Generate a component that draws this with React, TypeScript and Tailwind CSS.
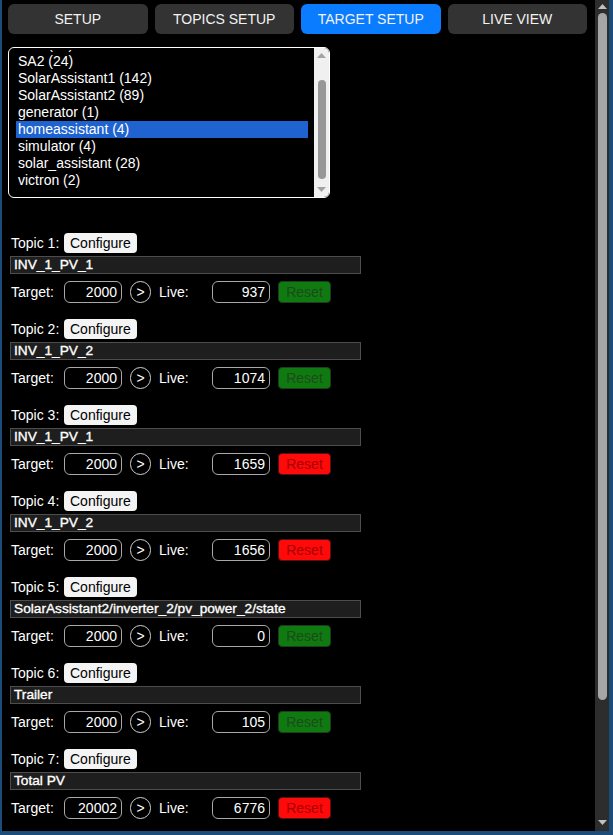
import React from "react";

const topics = [
  { n: 1, name: "INV_1_PV_1", target: "2000", live: "937", ok: true },
  { n: 2, name: "INV_1_PV_2", target: "2000", live: "1074", ok: true },
  { n: 3, name: "INV_1_PV_1", target: "2000", live: "1659", ok: false },
  { n: 4, name: "INV_1_PV_2", target: "2000", live: "1656", ok: false },
  { n: 5, name: "SolarAssistant2/inverter_2/pv_power_2/state", target: "2000", live: "0", ok: true },
  { n: 6, name: "Trailer", target: "2000", live: "105", ok: true },
  { n: 7, name: "Total PV", target: "20002", live: "6776", ok: false },
];

const items = [
  "SA1 (24)",
  "SA2 (24)",
  "SolarAssistant1 (142)",
  "SolarAssistant2 (89)",
  "generator (1)",
  "homeassistant (4)",
  "simulator (4)",
  "solar_assistant (28)",
  "victron (2)",
];

const tabs = ["SETUP", "TOPICS SETUP", "TARGET SETUP", "LIVE VIEW"];

function Up({ color }: { color: string }) {
  return (
    <svg width="9" height="5" viewBox="0 0 9 5">
      <polygon points="0,5 4.5,0 9,5" fill={color} />
    </svg>
  );
}
function Down({ color }: { color: string }) {
  return (
    <svg width="9" height="5" viewBox="0 0 9 5">
      <polygon points="0,0 9,0 4.5,5" fill={color} />
    </svg>
  );
}

export default function App() {
  return (
    <div
      className="flex h-[835px] w-[613px] overflow-hidden bg-black text-white border-l-2 border-r-4 border-b-4 border-[#1b4c7a]"
      style={{ fontFamily: '"Liberation Sans", Arial, sans-serif' }}
    >
      <div className="flex-1 min-w-0 flex flex-col">
        <div className="grid grid-cols-4 gap-[7px] pl-[6px] pr-[8px] pt-[4px]">
          {tabs.map((t) => (
            <div
              key={t}
              className={`h-[30px] rounded-[6px] flex items-center justify-center text-[14px] text-[#f2f2f2] ${
                t === "TARGET SETUP" ? "bg-[#0a7cff]" : "bg-[#333333]"
              }`}
            >
              {t}
            </div>
          ))}
        </div>

        <div className="ml-[6px] mt-[13px] w-[322px] h-[151px] border-[1.5px] border-white rounded-[6px] flex overflow-hidden">
          <div className="flex-1 min-w-0 pl-[7px] pr-[6px] pt-[2px] flex flex-col">
            <div className="flex-1 overflow-hidden">
              <div className="mt-[-14px]">
                {items.map((it) => (
                  <div
                    key={it}
                    className={`h-[17px] leading-[17px] pl-[2px] text-[14px] whitespace-nowrap ${
                      it === "homeassistant (4)" ? "bg-[#1f63d0]" : ""
                    }`}
                  >
                    {it}
                  </div>
                ))}
              </div>
            </div>
          </div>
          <div className="w-[15px] bg-[#f0f0f0] flex flex-col items-center py-[5px]">
            <Up color="#a3a3a3" />
            <div className="flex-1 w-full flex flex-col items-center pt-[22px] pb-[8px]">
              <div className="w-[8px] flex-1 rounded-full bg-[#979797]" />
            </div>
            <Down color="#a3a3a3" />
          </div>
        </div>

        <div className="mt-[35px] pl-[9px] flex flex-col gap-[16px]">
          {topics.map((t) => (
            <div key={t.n} className="flex flex-col">
              <div className="flex items-center h-[20px] text-[14px]">
                <span className="w-[53px]">Topic {t.n}:</span>
                <span className="h-[20px] px-[6px] rounded-[4px] bg-[#f4f4f4] text-black flex items-center">
                  Configure
                </span>
              </div>
              <div className="mt-[3px] ml-[-1px] w-[351px] h-[18px] bg-[#1e1e1e] border border-[#4d4d4d] text-[13.7px] leading-[16px] pl-[3px] whitespace-nowrap overflow-hidden [-webkit-text-stroke:0.35px_#ffffff]">
                {t.name}
              </div>
              <div className="mt-[7px] flex items-center h-[22px] text-[14px]">
                <span className="w-[53px]">Target:</span>
                <span className="w-[58px] h-[22px] rounded-[6px] border border-[#a8a8a8] text-right pr-[4px] leading-[20px]">
                  {t.target}
                </span>
                <span className="ml-[8px] w-[21px] h-[22px] rounded-full border border-[#d0d0d0] flex items-center justify-center text-[14px]">
                  &gt;
                </span>
                <span className="ml-[8px] w-[53px]">Live:</span>
                <span className="w-[58px] h-[22px] rounded-[6px] border border-[#a8a8a8] text-right pr-[4px] leading-[20px]">
                  {t.live}
                </span>
                <span
                  className={`ml-[8px] w-[53px] h-[22px] rounded-[4px] border flex items-center justify-center text-[14px] ${
                    t.ok
                      ? "bg-[#0f7a0f] text-[#1e4a1e] border-[#1d3d1d]"
                      : "bg-[#ff0a0a] text-[#a80000] border-[#5a1010]"
                  }`}
                >
                  Reset
                </span>
              </div>
            </div>
          ))}
        </div>
      </div>

      <div className="w-[14px] bg-[#2d2d2d] flex flex-col items-center pt-[4px] pb-[6px]">
        <Up color="#c0c0c0" />
        <div className="flex-1 w-full flex flex-col items-center pt-[4px] pb-[120px]">
          <div className="w-[9px] flex-1 rounded-full bg-[#a6a6a6]" />
        </div>
        <Down color="#c0c0c0" />
      </div>
    </div>
  );
}
